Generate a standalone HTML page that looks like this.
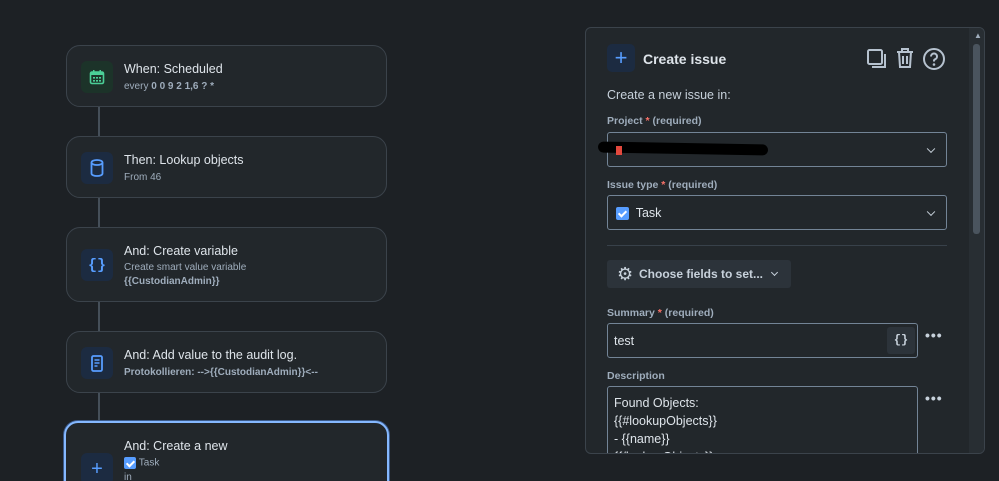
<!DOCTYPE html>
<html><head><style>
*{box-sizing:border-box;margin:0;padding:0}
html{width:999px;height:481px;overflow:hidden}
body{width:999px;height:481px;overflow:hidden;background:#1d2125;font-family:"Liberation Sans",sans-serif;color:#c7d1db;position:relative}
.card{position:absolute;left:66px;width:321px;background:#22272b;border:1px solid #3b434b;border-radius:14px}
.ib{position:absolute;left:14px;width:32px;height:32px;border-radius:6px;background:#1c2b41;display:flex;align-items:center;justify-content:center}
.t{position:absolute;left:57px;font-size:12.5px;color:#dee4ea}
.s{position:absolute;left:57px;font-size:10px;color:#9fadbc}
.line{position:absolute;left:98px;width:2px;background:#454f59}
.panel{position:absolute;left:585px;top:27px;width:400px;height:427px;background:#22272b;border:1px solid #3b434b;border-radius:6px;overflow:hidden}
.lbl{position:absolute;left:21px;font-size:10.5px;font-weight:bold;color:#9fadbc}
.lbl b{color:#f87168}
.inp{position:absolute;left:21px;border:1px solid #738496;border-radius:3px;background:#22272b}
.chev{position:absolute;right:12px;top:50%;width:6px;height:6px;border-right:1.6px solid #c7d1db;border-bottom:1.6px solid #c7d1db;transform:translateY(-70%) rotate(45deg)}
.dots{position:absolute;left:339px;font-size:14px;letter-spacing:1px;color:#c7d1db;font-weight:bold}
.cb{display:inline-block;width:13px;height:13px;background:#579dff;border-radius:2px;position:relative;vertical-align:middle}
.cb:after{content:"";position:absolute;left:4px;top:1.5px;width:3px;height:6px;border-right:2px solid #fff;border-bottom:2px solid #fff;transform:rotate(45deg)}
</style></head><body>
<div class="line" style="top:107px;height:29px"></div>
<div class="line" style="top:198px;height:29px"></div>
<div class="line" style="top:302px;height:29px"></div>
<div class="line" style="top:393px;height:28px"></div>

<div class="card" style="top:45px;height:62px">
 <div class="ib" style="top:15px;background:#1c3329"><svg width="16" height="16" viewBox="0 0 16 16"><rect x="1.5" y="3" width="13" height="11.5" rx="1.5" fill="none" stroke="#4bce97" stroke-width="1.6"/><rect x="1.5" y="3" width="13" height="3" fill="#4bce97"/><rect x="4" y="1" width="1.5" height="3" fill="#4bce97"/><rect x="10.5" y="1" width="1.5" height="3" fill="#4bce97"/><g fill="#4bce97"><rect x="4" y="8" width="2" height="1.6"/><rect x="7" y="8" width="2" height="1.6"/><rect x="10" y="8" width="2" height="1.6"/><rect x="4" y="11" width="2" height="1.6"/><rect x="7" y="11" width="2" height="1.6"/><rect x="10" y="11" width="2" height="1.6"/></g></svg></div>
 <div class="t" style="top:16px">When: Scheduled</div>
 <div class="s" style="top:35px">every <b>0 0 9 2 1,6 ? *</b></div>
</div>
<div class="card" style="top:136px;height:62px">
 <div class="ib" style="top:15px"><svg width="14" height="18" viewBox="0 0 14 18"><ellipse cx="7" cy="3.5" rx="5.5" ry="2.5" fill="none" stroke="#579dff" stroke-width="1.8"/><path d="M1.5 3.5V14.5c0 1.4 2.5 2.5 5.5 2.5s5.5-1.1 5.5-2.5V3.5" fill="none" stroke="#579dff" stroke-width="1.8"/></svg></div>
 <div class="t" style="top:16px">Then: Lookup objects</div>
 <div class="s" style="top:35px">From 46</div>
</div>
<div class="card" style="top:227px;height:75px">
 <div class="ib" style="top:21px;color:#579dff;font-size:15px;font-weight:bold;font-family:'Liberation Mono',monospace">{}</div>
 <div class="t" style="top:16px">And: Create variable</div>
 <div class="s" style="top:34px">Create smart value variable</div>
 <div class="s" style="top:48px;font-weight:bold">{{CustodianAdmin}}</div>
</div>
<div class="card" style="top:331px;height:62px">
 <div class="ib" style="top:15px"><svg width="12" height="17" viewBox="0 0 12 17"><rect x="1" y="1" width="10" height="15" rx="1.5" fill="none" stroke="#579dff" stroke-width="1.8"/><path d="M3.5 5h5M3.5 8h5M3.5 11h3" stroke="#579dff" stroke-width="1.5"/></svg></div>
 <div class="t" style="top:16px">And: Add value to the audit log.</div>
 <div class="s" style="top:35px;font-weight:bold">Protokollieren: --&gt;{{CustodianAdmin}}&lt;--</div>
</div>
<div class="card" style="top:421px;height:80px;left:64px;width:325px;border:2px solid #85b8ff;box-shadow:0 0 0 1px #3b5a8a">
 <div class="ib" style="top:30px;left:15px;color:#579dff;font-size:20px">+</div>
 <div class="t" style="top:16px;left:58px">And: Create a new</div>
 <div class="s" style="top:34px;left:58px"><span class="cb" style="width:12px;height:12px"></span>&nbsp;Task</div>
 <div class="s" style="top:49px;left:58px">in</div>
</div>

<div class="panel">
 <div style="position:absolute;left:21px;top:16px;width:28px;height:28px;border-radius:5px;background:#1c2b41;color:#579dff;font-size:22px;line-height:27px;text-align:center">+</div>
 <div style="position:absolute;left:57px;top:23px;font-size:14px;font-weight:bold;color:#dee4ea">Create issue</div>
 <svg style="position:absolute;left:280px;top:20px" width="22" height="22" viewBox="0 0 22 22"><rect x="2" y="2" width="14" height="14" rx="1.5" fill="none" stroke="#b6c2cf" stroke-width="2"/><path d="M19 6v13H6" fill="none" stroke="#b6c2cf" stroke-width="2"/></svg>
 <svg style="position:absolute;left:309px;top:19px" width="20" height="22" viewBox="0 0 20 22"><path d="M2 5h16M7 5V2h6v3M4 5l1 15h10l1-15M8 9v8M12 9v8" fill="none" stroke="#b6c2cf" stroke-width="2"/></svg>
 <svg style="position:absolute;left:336px;top:19px" width="24" height="24" viewBox="0 0 24 24"><circle cx="12" cy="12" r="10" fill="none" stroke="#b6c2cf" stroke-width="2"/><path d="M9 9.5a3 3 0 1 1 4 2.8c-.8.4-1 .9-1 1.7v.5" fill="none" stroke="#b6c2cf" stroke-width="2"/><circle cx="12" cy="17.5" r="1.3" fill="#b6c2cf"/></svg>
 <div style="position:absolute;left:21px;top:60px;font-size:12.5px;color:#c7d1db">Create a new issue in:</div>
 <div class="lbl" style="top:87px">Project <b>*</b> (required)</div>
 <div class="inp" style="top:104px;width:340px;height:35px"><div style="position:absolute;left:-10px;top:10px;width:170px;height:11px;background:#000;border-radius:6px;transform:rotate(1deg)"></div><div style="position:absolute;left:8px;top:13px;width:6px;height:9px;background:#e2483d"></div><div class="chev"></div></div>
 <div class="lbl" style="top:151px">Issue type <b>*</b> (required)</div>
 <div class="inp" style="top:167px;width:340px;height:35px"><div style="position:absolute;left:8px;top:10px;font-size:12.5px;color:#dee4ea"><span class="cb"></span>&nbsp; Task</div><div class="chev"></div></div>
 <div style="position:absolute;left:21px;top:217px;width:340px;height:1px;background:#38414a"></div>
 <div style="position:absolute;left:21px;top:232px;width:184px;height:28px;background:#2c333a;border-radius:3px;font-size:12px;font-weight:bold;color:#c7d1db;line-height:28px;padding-left:32px">Choose fields to set...<span style="position:absolute;left:10px;top:0;font-size:18px;font-weight:normal">⚙</span><span style="position:absolute;right:14px;top:10px;width:5px;height:5px;border-right:1.5px solid #c7d1db;border-bottom:1.5px solid #c7d1db;transform:rotate(45deg)"></span></div>
 <div class="lbl" style="top:279px">Summary <b>*</b> (required)</div>
 <div class="inp" style="top:295px;width:311px;height:35px"><div style="position:absolute;left:6px;top:10px;font-size:12.5px;color:#dee4ea">test</div><div style="position:absolute;right:2px;top:3px;width:28px;height:27px;background:#2c333a;border-radius:3px;text-align:center;line-height:27px;font-size:12px;font-weight:bold;font-family:'Liberation Mono',monospace">{}</div></div>
 <div class="dots" style="top:299px">•••</div>
 <div class="lbl" style="top:342px">Description</div>
 <div class="inp" style="top:358px;width:311px;height:80px;padding:7px 6px;font-size:12.5px;line-height:18px;color:#dee4ea">Found Objects:<br>{{#lookupObjects}}<br>- {{name}}<br>{{/lookupObjects}}</div>
 <div class="dots" style="top:362px">•••</div>
 <div style="position:absolute;left:383px;top:0;width:17px;height:427px;background:#282e33"></div>
 <div style="position:absolute;left:387px;top:16px;width:7px;height:190px;background:#4a545e;border-radius:3px"></div>
 <div style="position:absolute;left:388px;top:3px;font-size:8px;color:#9fadbc">▲</div>
</div>
</body></html>
